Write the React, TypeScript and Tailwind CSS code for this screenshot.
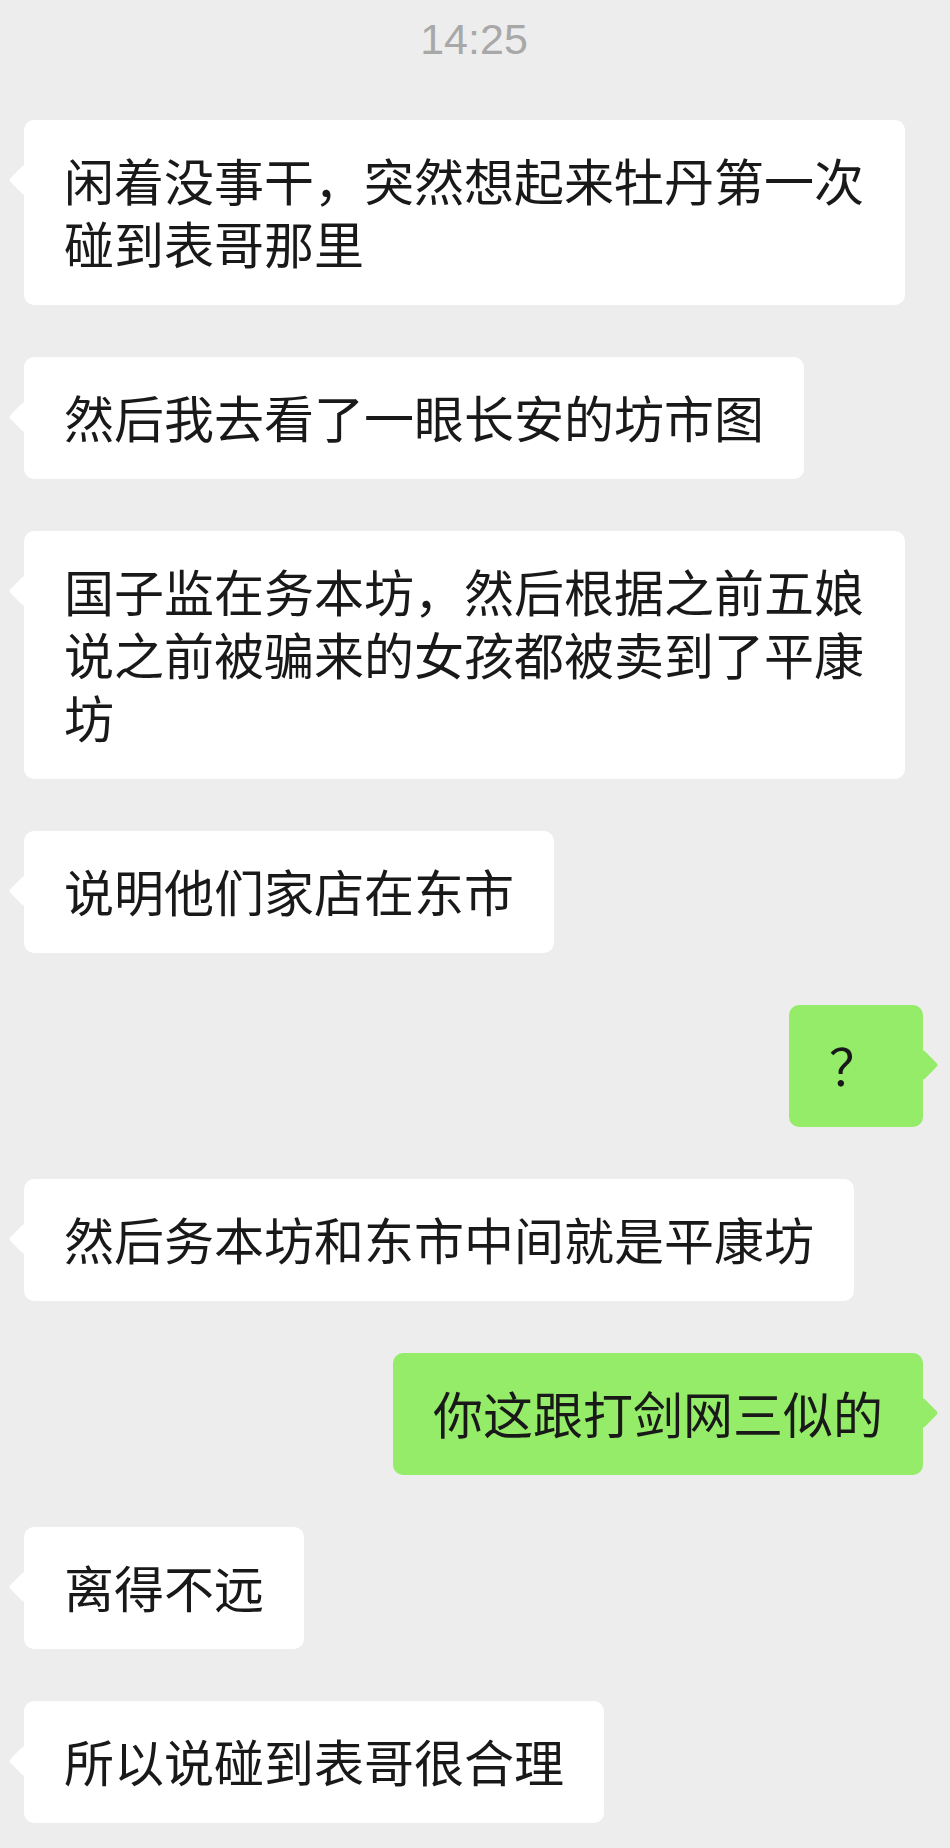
import React from "react";

type Msg = { side: "left" | "right"; text: string };

const messages: Msg[] = [
  { side: "left", text: "闲着没事干，突然想起来牡丹第一次碰到表哥那里" },
  { side: "left", text: "然后我去看了一眼长安的坊市图" },
  {
    side: "left",
    text: "国子监在务本坊，然后根据之前五娘说之前被骗来的女孩都被卖到了平康坊",
  },
  { side: "left", text: "说明他们家店在东市" },
  { side: "right", text: "？" },
  { side: "left", text: "然后务本坊和东市中间就是平康坊" },
  { side: "right", text: "你这跟打剑网三似的" },
  { side: "left", text: "离得不远" },
  { side: "left", text: "所以说碰到表哥很合理" },
];

// 单个气泡，带小三角
const Bubble: React.FC<{ msg: Msg }> = ({ msg }) => {
  const mine = msg.side === "right";
  return (
    <div className={mine ? "flex justify-end pr-[27px]" : "flex justify-start pl-[24px]"}>
      <div
        className={`relative min-w-[134px] max-w-[881px] rounded-[10px] px-[40px] pt-[28px] pb-[31px] text-[50px] leading-[63px] text-[#191919] ${
          mine ? "bg-[#95ec69]" : "bg-white"
        }`}
      >
        <span
          className={`absolute top-[49px] h-[22px] w-[22px] rotate-45 rounded-[3px] ${
            mine ? "right-[-11px] bg-[#95ec69]" : "left-[-11px] bg-white"
          }`}
        />
        <span className="relative break-all">{msg.text}</span>
      </div>
    </div>
  );
};

const App: React.FC = () => {
  return (
    <div
      className="min-h-[1848px] w-full bg-[#ededed]"
      style={{ fontFamily: '"Noto Sans CJK SC", "Noto Sans", sans-serif' }}
    >
      <div className="flex h-[77px] items-center justify-center pt-px pr-[2px] font-['Liberation_Sans',sans-serif] text-[43px] text-[#a8a8a8]">
        14:25
      </div>
      <div className="mt-[43px] flex flex-col gap-[52px] pb-[26px]">
        {messages.map((m, i) => (
          <Bubble key={i} msg={m} />
        ))}
      </div>
    </div>
  );
};

export default App;
